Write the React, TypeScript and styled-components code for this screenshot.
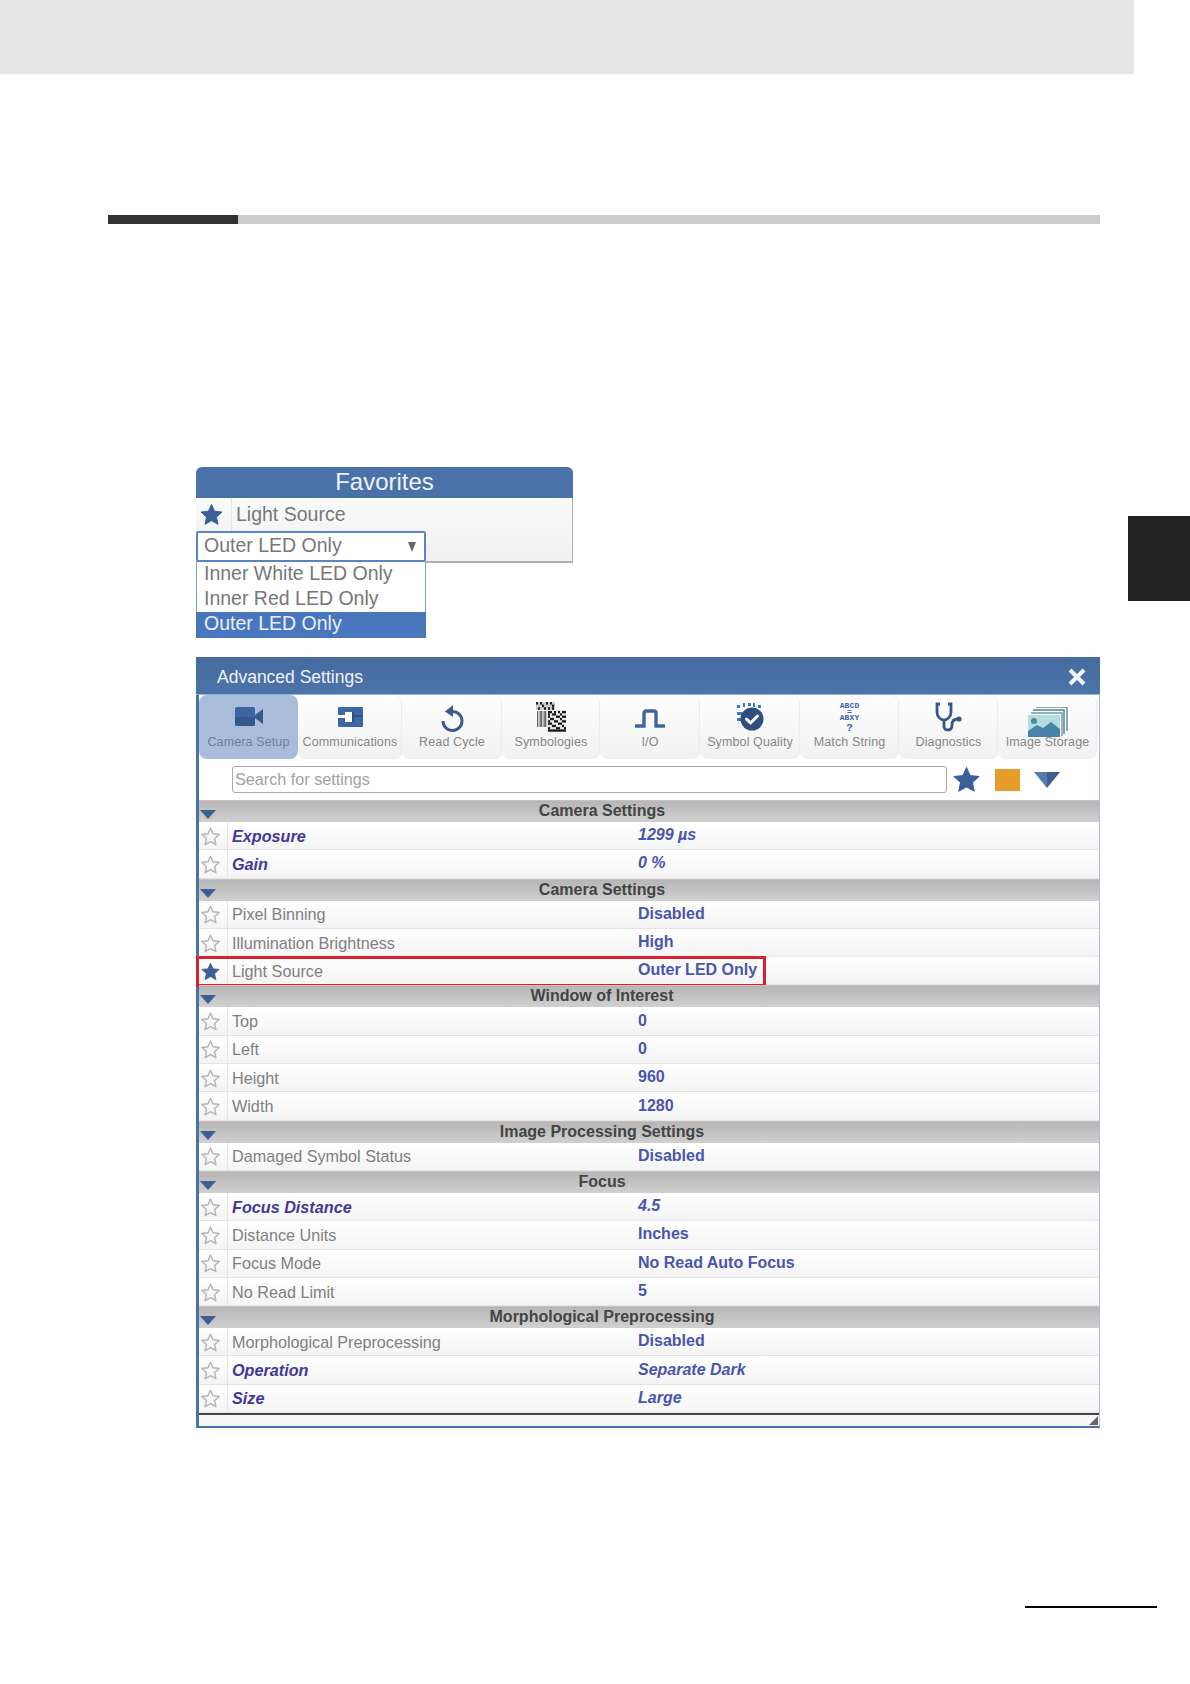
import React from "react";
import styled, { createGlobalStyle } from "styled-components";

const GlobalStyle = createGlobalStyle`
  html, body {
    margin: 0;
    padding: 0;
    background: #fff;
    font-family: "Liberation Sans", Arial, sans-serif;
  }
`;

const Page = styled.div`
  width: 1190px;
  height: 1684px;
  overflow: hidden;
  background: #fff;
`;

const TopBand = styled.div`
  width: 1134px;
  height: 74px;
  background: #e6e6e6;
`;

const HeadingRule = styled.div`
  width: 992px;
  height: 9px;
  margin: 141px 0 243px 108px;
  background: linear-gradient(to right, #333 130px, #ccc 130px);
`;

const FavoritesRow = styled.div`
  display: flex;
  justify-content: space-between;
  align-items: flex-start;
  padding-left: 196px;
`;

const ThumbTab = styled.div`
  width: 62px;
  height: 85px;
  margin-top: 49px;
  background: #222;
`;

const Favorites = styled.div`
  position: relative;
  width: 377px;
  height: 171px;
`;

const FavoritesPanel = styled.div`
  height: 96px;
  box-sizing: border-box;
  border-right: 1px solid #b0b0b0;
  border-bottom: 2px solid #b0b0b0;
  border-radius: 6px 6px 0 0;
  background: linear-gradient(#fff, #f0f0f0);
`;

const FavoritesTitle = styled.div`
  height: 31px;
  margin-right: -1px;
  padding-bottom: 1px;
  box-sizing: border-box;
  border-radius: 6px 6px 0 0;
  background: #4a72a9;
  color: #eef3fa;
  font-size: 24px;
  line-height: 30px;
  text-align: center;
`;

const FavoritesItem = styled.div`
  display: flex;
  align-items: center;
  height: 33px;
  color: #777;
  font-size: 19.5px;
`;

const FavoritesStar = styled.div`
  display: flex;
  align-items: center;
  justify-content: center;
  box-sizing: border-box;
  width: 36px;
  height: 33px;
  padding-right: 4px;
  margin-right: 4px;
  border-right: 1px solid #e4e4e4;
`;

const SelectMenu = styled.div`
  position: absolute;
  top: 64px;
  left: 0;
  width: 230px;
  color: #777;
  font-size: 19.5px;
`;

const SelectBox = styled.div`
  display: flex;
  align-items: center;
  justify-content: space-between;
  box-sizing: border-box;
  height: 31px;
  padding: 0 8px 2px 6px;
  border: 2px solid #5b84c4;
  border-radius: 2px;
  background: #fff;
`;

const SelectArrow = styled.span`
  width: 0;
  height: 0;
  margin-top: 2px;
  border-left: 4px solid transparent;
  border-right: 4px solid transparent;
  border-top: 10px solid #666;
`;

const OptionList = styled.div`
  box-sizing: border-box;
  border-left: 1px solid #7f9fd0;
  border-right: 1px solid #7f9fd0;
  background: #fff;
`;

const Option = styled.div<{ $selected?: boolean }>`
  height: ${(p) => (p.$selected ? "26px" : "25px")};
  padding-left: ${(p) => (p.$selected ? "8px" : "7px")};
  margin: 0 ${(p) => (p.$selected ? "-1px" : "0")};
  background: ${(p) => (p.$selected ? "#4a76bd" : "transparent")};
  color: ${(p) => (p.$selected ? "#e9f0fb" : "#777")};
  line-height: 23px;
`;

const Dialog = styled.div`
  box-sizing: border-box;
  width: 904px;
  height: 771px;
  margin: 19px 0 178px 196px;
  border-left: 3px solid #4a72a9;
  border-right: 1px solid #a9bcd8;
  border-bottom: 3px solid #4a72a9;
  background: #fff;
`;

const TitleBar = styled.div`
  display: flex;
  align-items: center;
  justify-content: space-between;
  box-sizing: border-box;
  height: 38px;
  margin-left: -3px;
  margin-right: -1px;
  padding: 2px 14px 0 21px;
  border-top: 1px solid #4a6ea1;
  border-bottom: 1px solid #8fb5dc;
  background: linear-gradient(#456b9f, #4d74aa);
  color: #eef3fa;
  font-size: 17.5px;
`;

const TabBar = styled.div`
  display: grid;
  grid-template-columns: 99px 104px 100px 98px 100px 100px 99px 99px 99px;
  height: 64px;
`;

const Tab = styled.div<{ $active?: boolean }>`
  display: flex;
  flex-direction: column;
  align-items: center;
  box-sizing: border-box;
  height: 64px;
  border-radius: 8px;
  background: ${(p) =>
    p.$active ? "#a9bcd9" : "linear-gradient(#fff, #f1f1f1)"};
  box-shadow: ${(p) => (p.$active ? "none" : "inset -1px 0 1px #ececec")};
  color: ${(p) => (p.$active ? "#6f7f99" : "#868686")};
  font-size: 12.5px;
  letter-spacing: 0.12px;
  white-space: nowrap;
`;

const TabIcon = styled.div`
  display: flex;
  align-items: flex-start;
  justify-content: center;
  height: 40px;
  padding-top: 12px;
  box-sizing: border-box;
`;

const MatchGlyph = styled.div`
  display: flex;
  flex-direction: column;
  align-items: center;
  margin-top: -4px;
  color: #3f5f9a;
  font-family: "Liberation Mono", monospace;
  font-size: 8px;
  font-weight: 700;
`;

const MatchLines = styled.div`
  line-height: 6px;
  text-align: center;
  white-space: pre-line;
`;

const MatchQuestion = styled.div`
  margin-top: 2px;
  font-size: 11px;
  line-height: 10px;
`;

const SearchRow = styled.div`
  display: flex;
  align-items: center;
  height: 41px;
  padding-left: 33px;
`;

const SearchBox = styled.div`
  box-sizing: border-box;
  width: 715px;
  height: 27px;
  margin-right: 6px;
  padding-left: 2px;
  border: 1px solid #a8a8a8;
  border-radius: 3px;
  color: #a2a2a2;
  font-size: 16.2px;
  line-height: 25px;
`;

const OrangeSwatch = styled.div`
  width: 25px;
  height: 22px;
  margin: 0 14px 0 15px;
  background: #e79d2c;
`;

const SectionBar = styled.div`
  position: relative;
  box-sizing: border-box;
  height: 22px;
  padding-right: 94px;
  border-top: 1px solid #cdbfc0;
  background: linear-gradient(#b6b6b6, #d0d0d0);
  color: #444;
  font-size: 16px;
  font-weight: 700;
  line-height: 20px;
  text-align: center;
`;

const SectionArrow = styled.span`
  position: absolute;
  left: 1px;
  top: 9px;
  width: 0;
  height: 0;
  border-left: 8.5px solid transparent;
  border-right: 8.5px solid transparent;
  border-top: 9px solid #3c5f96;
`;

const Row = styled.div<{ $highlight?: boolean }>`
  position: relative;
  display: grid;
  grid-template-columns: 29px 410px 1fr;
  align-items: center;
  box-sizing: border-box;
  height: 28.3px;
  border-bottom: 1px solid #e4e4e4;
  background: linear-gradient(#fff, #f4f4f4);

  ${(p) =>
    p.$highlight &&
    `
    &::after {
      content: "";
      position: absolute;
      left: -3px;
      top: -1px;
      width: 564px;
      height: 25px;
      border: 3px solid #d9202e;
    }
  `}
`;

const StarCell = styled.div`
  display: flex;
  align-items: center;
  justify-content: center;
  height: 100%;
  padding: 1px 5px 0 0;
  box-sizing: border-box;
  border-right: 1px solid #e6e6e6;
`;

const RowName = styled.div<{ $modified?: boolean }>`
  padding: 1px 0 0 4px;
  color: ${(p) => (p.$modified ? "#40399a" : "#808080")};
  font-size: 16.2px;
  font-weight: ${(p) => (p.$modified ? 700 : 400)};
  font-style: ${(p) => (p.$modified ? "italic" : "normal")};
`;

const RowValue = styled.div<{ $modified?: boolean }>`
  padding-bottom: 1px;
  color: #4a55ae;
  font-size: 16px;
  font-weight: 700;
  font-style: ${(p) => (p.$modified ? "italic" : "normal")};
`;

const DialogFooter = styled.div`
  display: flex;
  align-items: flex-end;
  justify-content: flex-end;
  box-sizing: border-box;
  height: 13px;
  padding: 0 1px 1px 0;
  border-top: 2px solid #444;
  background: #f8f8f8;
`;

const PageMark = styled.div`
  width: 132px;
  height: 2px;
  margin-left: 1025px;
  background: #000;
`;

type StarProps = { size: number; filled?: boolean };

const Star = ({ size, filled }: StarProps) => (
  <svg width={size} height={size} viewBox="0 0 24 24">
    <polygon
      points="12,1.5 15.2,8.6 23,9.4 17.2,14.6 18.8,22.3 12,18.4 5.2,22.3 6.8,14.6 1,9.4 8.8,8.6"
      fill={filled ? "#3a5f96" : "#f6f6f6"}
      stroke={filled ? "#3a5f96" : "#b4b4b4"}
      strokeWidth={filled ? 1 : 1.8}
      strokeLinejoin="round"
    />
  </svg>
);

const CameraIcon = () => (
  <svg width="28" height="19" viewBox="0 0 28 19">
    <rect x="0" y="0" width="20" height="19" rx="2" fill="#3f659f" />
    <path d="M0 10H20V17a2 2 0 0 1-2 2H2a2 2 0 0 1-2-2Z" fill="#34578c" />
    <polygon points="20,8 28,2 28,17 20,11" fill="#34578c" />
  </svg>
);

const CommsIcon = () => (
  <svg width="25" height="20" viewBox="0 0 25 20">
    <rect width="25" height="20" rx="1" fill="#3d68a8" />
    <rect x="0" y="8" width="7" height="3" fill="#fff" />
    <path d="M7 5H14V15H7Z" fill="#fff" />
    <rect x="14" y="8" width="11" height="2" fill="#2e507f" />
    <rect x="14" y="5" width="2" height="10" fill="#2e507f" />
  </svg>
);

const ReadCycleIcon = () => (
  <svg width="24" height="28" viewBox="0 0 24 28" style={{ marginTop: -2 }}>
    <path
      d="M12 6.5A9.5 9.5 0 1 1 3 16"
      fill="none"
      stroke="#3a5a8c"
      strokeWidth="3"
    />
    <polygon points="13,0 13,12 5,6.5" fill="#3a5a8c" />
  </svg>
);

const qrCells = [
  [0, 0], [2, 0], [3, 1], [5, 0], [7, 0], [8, 1], [1, 2], [4, 2], [6, 2], [8, 2],
];
const matrixCells = [
  [0, 0], [1, 0], [3, 0], [5, 0], [7, 0], [8, 0], [0, 1], [2, 1], [3, 1], [6, 1],
  [0, 2], [4, 2], [5, 2], [7, 2], [8, 2], [1, 3], [2, 3], [6, 3], [0, 4], [3, 4],
  [4, 4], [7, 4], [8, 4], [0, 5], [1, 5], [5, 5], [6, 5], [2, 6], [3, 6], [7, 6],
  [0, 7], [4, 7], [5, 7], [8, 7], [0, 8], [1, 8], [2, 8], [3, 8], [4, 8], [5, 8],
  [6, 8], [7, 8], [8, 8],
];

const SymbologiesIcon = () => (
  <svg width="30" height="30" viewBox="0 0 30 30" style={{ marginTop: -5 }}>
    <rect x="0" y="0" width="19" height="8" fill="#ccc" />
    {qrCells.map(([x, y]) => (
      <rect key={`${x}-${y}`} x={x * 2} y={y * 2.6} width="2" height="2.6" fill="#222" />
    ))}
    {[1, 3.5, 5, 7.5, 9].map((x) => (
      <rect key={x} x={x} y="9" width="1.3" height="16" fill="#666" />
    ))}
    <rect x="11" y="8" width="19" height="22" fill="#e6e6e6" />
    {matrixCells.map(([x, y]) => (
      <rect key={`${x}-${y}`} x={12 + x * 2} y={9 + y * 2.3} width="2" height="2.3" fill="#1d1d1d" />
    ))}
  </svg>
);

const PulseIcon = () => (
  <svg width="30" height="19" viewBox="0 0 30 19" style={{ marginTop: 2 }}>
    <path
      d="M1 17H9V4a2 2 0 0 1 2-2h8a2 2 0 0 1 2 2V17H29"
      fill="none"
      stroke="#3f659f"
      strokeWidth="3.4"
      strokeLinecap="round"
    />
  </svg>
);

const QualityIcon = () => (
  <svg width="27" height="28" viewBox="0 0 27 28" style={{ marginTop: -4 }}>
    <g fill="#3a7ac0">
      <rect x="0" y="2" width="3" height="3" />
      <rect x="6" y="0" width="2" height="4" />
      <rect x="11" y="0" width="3" height="3" />
      <rect x="16" y="0" width="2" height="4" />
      <rect x="21" y="2" width="3" height="3" />
      <rect x="0" y="9" width="5" height="3" />
      <rect x="0" y="15" width="5" height="3" />
    </g>
    <circle cx="15" cy="16" r="11.5" fill="#2f4f80" />
    <path
      d="M9.5 16l4 4 7-7"
      fill="none"
      stroke="#fff"
      strokeWidth="3"
      strokeLinecap="round"
      strokeLinejoin="round"
    />
  </svg>
);

const StethoscopeIcon = () => (
  <svg width="27" height="30" viewBox="0 0 27 30" style={{ marginTop: -5 }}>
    <path
      d="M5 2H2V10C2 15 6 18 9 18C12 18 16 15 16 10V2H13M9 18V24C9 27 11 28 13 28C16 28 17 26 17 23C17 19 19 17 23 17"
      fill="none"
      stroke="#34588c"
      strokeWidth="2.8"
    />
    <circle cx="24" cy="17" r="2.6" fill="#34588c" />
  </svg>
);

const ImageStackIcon = () => (
  <svg width="40" height="30" viewBox="0 0 40 30">
    <path d="M8 0H39V24" fill="none" stroke="#5f8c9c" strokeWidth="1.4" />
    <path d="M5 3H36V27" fill="none" stroke="#4f8096" strokeWidth="1.4" />
    <path d="M3 6H34V29" fill="none" stroke="#6f9aa8" strokeWidth="1.4" />
    <rect x="0" y="8" width="32" height="22" fill="#b3dbe0" />
    <circle cx="6" cy="14" r="3" fill="#4a8aa0" />
    <path d="M0 30V24L9 18L15 21L23 15L32 22V30Z" fill="#4a84aa" />
  </svg>
);

const CloseIcon = () => (
  <svg width="18" height="18" viewBox="0 0 18 18">
    <path d="M2 2L16 16M16 2L2 16" stroke="#f2f5fa" strokeWidth="4" />
  </svg>
);

const GripIcon = () => (
  <svg width="9" height="9" viewBox="0 0 9 9">
    <polygon points="9,0 9,9 0,9" fill="#666" />
  </svg>
);

const SearchArrow = () => (
  <svg width="26" height="16" viewBox="0 0 26 16">
    <polygon points="0,0 13,0 13,16" fill="#5a7aa9" />
    <polygon points="13,0 26,0 13,16" fill="#3f5f92" />
  </svg>
);

const tabs: { label: string; icon: React.ReactNode; active?: boolean }[] = [
  { label: "Camera Setup", icon: <CameraIcon />, active: true },
  { label: "Communications", icon: <CommsIcon /> },
  { label: "Read Cycle", icon: <ReadCycleIcon /> },
  { label: "Symbologies", icon: <SymbologiesIcon /> },
  { label: "I/O", icon: <PulseIcon /> },
  { label: "Symbol Quality", icon: <QualityIcon /> },
  {
    label: "Match String",
    icon: (
      <MatchGlyph>
        <MatchLines>{"ABCD\n=\nABXY"}</MatchLines>
        <MatchQuestion>?</MatchQuestion>
      </MatchGlyph>
    ),
  },
  { label: "Diagnostics", icon: <StethoscopeIcon /> },
  { label: "Image Storage", icon: <ImageStackIcon /> },
];

type Setting = {
  name: string;
  value: string;
  modified?: boolean;
  favorite?: boolean;
};

const sections: { title: string; rows: Setting[] }[] = [
  {
    title: "Camera Settings",
    rows: [
      { name: "Exposure", value: "1299 µs", modified: true },
      { name: "Gain", value: "0 %", modified: true },
    ],
  },
  {
    title: "Camera Settings",
    rows: [
      { name: "Pixel Binning", value: "Disabled" },
      { name: "Illumination Brightness", value: "High" },
      { name: "Light Source", value: "Outer LED Only", favorite: true },
    ],
  },
  {
    title: "Window of Interest",
    rows: [
      { name: "Top", value: "0" },
      { name: "Left", value: "0" },
      { name: "Height", value: "960" },
      { name: "Width", value: "1280" },
    ],
  },
  {
    title: "Image Processing Settings",
    rows: [{ name: "Damaged Symbol Status", value: "Disabled" }],
  },
  {
    title: "Focus",
    rows: [
      { name: "Focus Distance", value: "4.5", modified: true },
      { name: "Distance Units", value: "Inches" },
      { name: "Focus Mode", value: "No Read Auto Focus" },
      { name: "No Read Limit", value: "5" },
    ],
  },
  {
    title: "Morphological Preprocessing",
    rows: [
      { name: "Morphological Preprocessing", value: "Disabled" },
      { name: "Operation", value: "Separate Dark", modified: true },
      { name: "Size", value: "Large", modified: true },
    ],
  },
];

const App = () => {
  return (
    <Page>
      <GlobalStyle />
      <TopBand />
      <HeadingRule />
      <FavoritesRow>
        <Favorites>
          <FavoritesPanel>
            <FavoritesTitle>Favorites</FavoritesTitle>
            <FavoritesItem>
              <FavoritesStar>
                <Star size={23} filled />
              </FavoritesStar>
              Light Source
            </FavoritesItem>
          </FavoritesPanel>
          <SelectMenu>
            <SelectBox>
              Outer LED Only
              <SelectArrow />
            </SelectBox>
            <OptionList>
              <Option>Inner White LED Only</Option>
              <Option>Inner Red LED Only</Option>
              <Option $selected>Outer LED Only</Option>
            </OptionList>
          </SelectMenu>
        </Favorites>
        <ThumbTab />
      </FavoritesRow>
      <Dialog>
        <TitleBar>
          Advanced Settings
          <CloseIcon />
        </TitleBar>
        <TabBar>
          {tabs.map((tab) => (
            <Tab key={tab.label} $active={tab.active}>
              <TabIcon>{tab.icon}</TabIcon>
              {tab.label}
            </Tab>
          ))}
        </TabBar>
        <SearchRow>
          <SearchBox>Search for settings</SearchBox>
          <Star size={27} filled />
          <OrangeSwatch />
          <SearchArrow />
        </SearchRow>
        {sections.map((section, i) => (
          <React.Fragment key={`${section.title}-${i}`}>
            <SectionBar>
              <SectionArrow />
              {section.title}
            </SectionBar>
            {section.rows.map((row) => (
              <Row key={row.name} $highlight={row.favorite}>
                <StarCell>
                  <Star size={19} filled={row.favorite} />
                </StarCell>
                <RowName $modified={row.modified}>{row.name}</RowName>
                <RowValue $modified={row.modified}>{row.value}</RowValue>
              </Row>
            ))}
          </React.Fragment>
        ))}
        <DialogFooter>
          <GripIcon />
        </DialogFooter>
      </Dialog>
      <PageMark />
    </Page>
  );
};

export default App;
